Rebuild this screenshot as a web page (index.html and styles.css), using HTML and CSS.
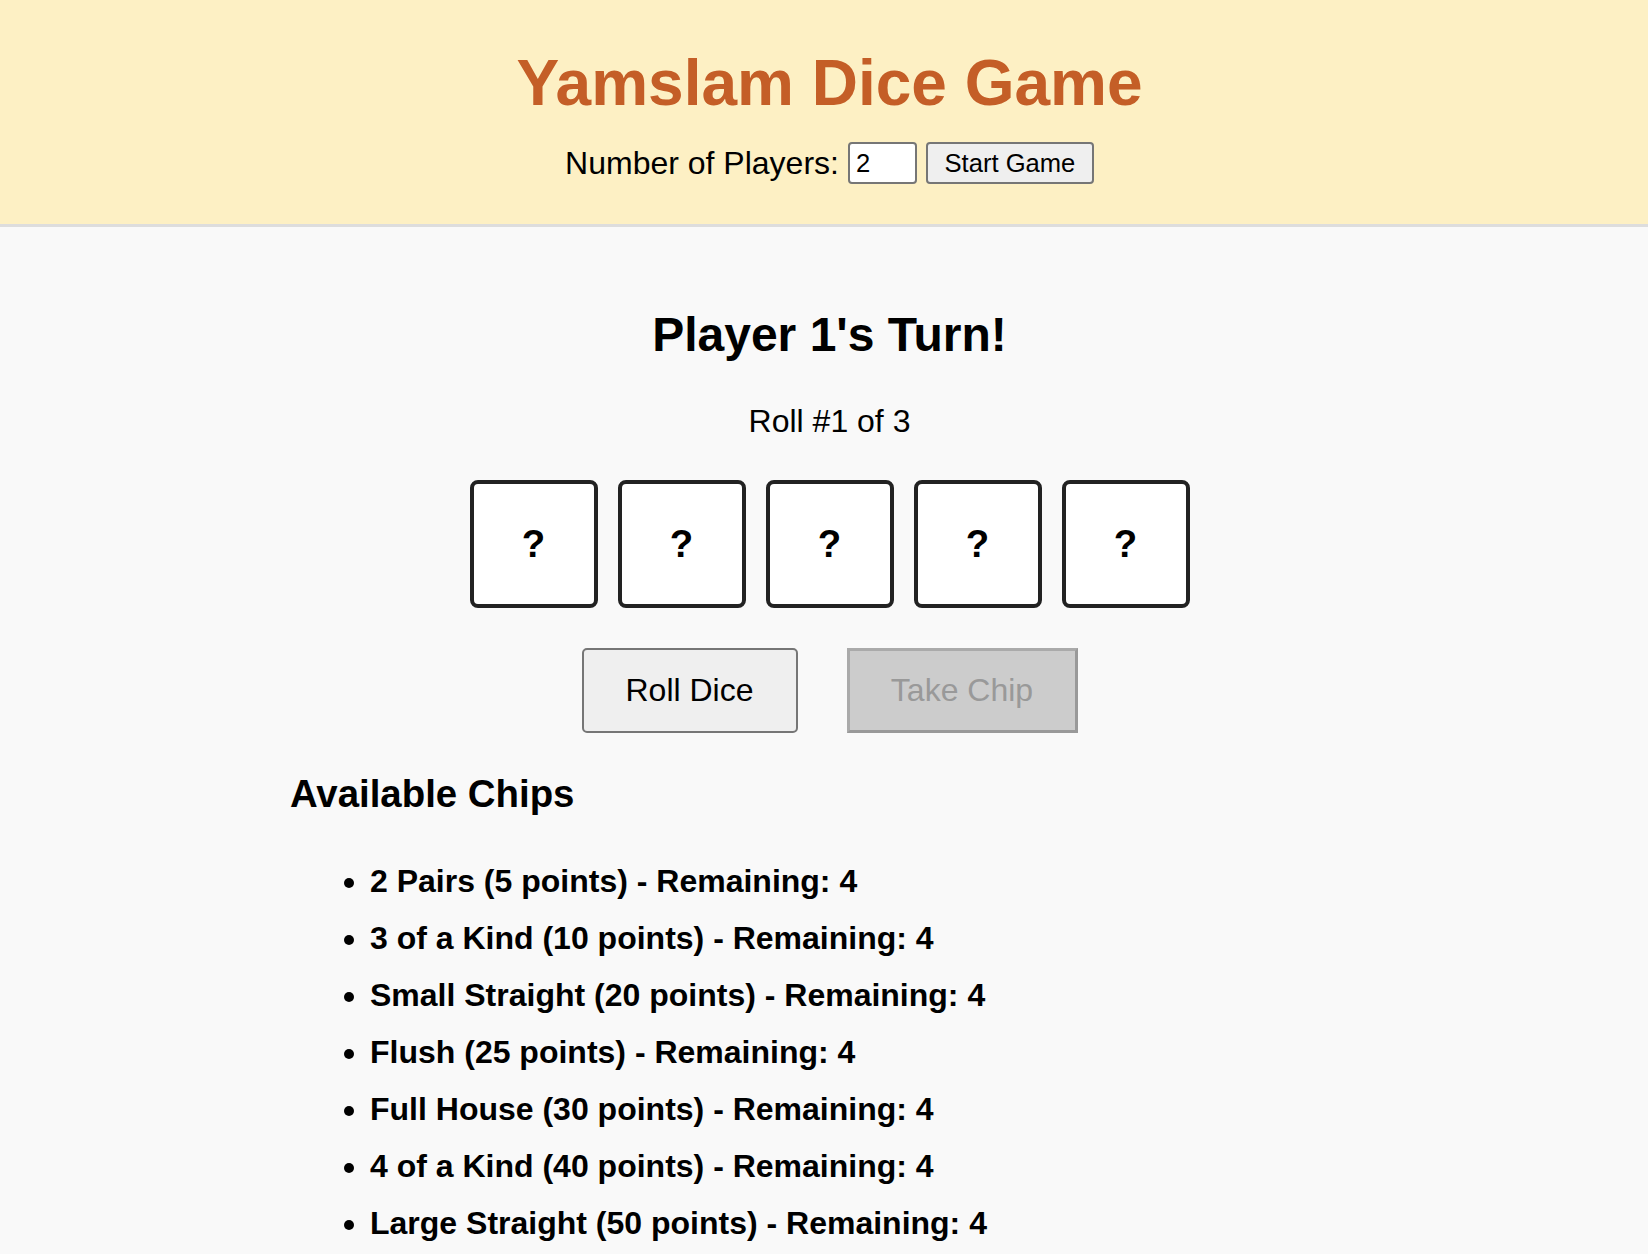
FILE: index.html
```html
<!DOCTYPE html>
<html lang="en">
<head>
<meta charset="utf-8">
<title>Yamslam Dice Game</title>
<link rel="stylesheet" href="styles.css">
</head>
<body>
<header class="site-header">
  <h1 class="title">Yamslam Dice Game</h1>
  <div class="setup">
    <label class="setup-label" for="players">Number of Players:</label>
    <input class="players-input" id="players" type="number" value="2">
    <button class="start-btn" type="button">Start Game</button>
  </div>
</header>
<main class="main">
  <div class="game">
    <h2 class="turn">Player 1's Turn!</h2>
    <p class="roll">Roll #1 of 3</p>
    <div class="dice">
      <div class="die">?</div>
      <div class="die">?</div>
      <div class="die">?</div>
      <div class="die">?</div>
      <div class="die">?</div>
    </div>
    <div class="actions">
      <button class="btn btn-roll" type="button">Roll Dice</button>
      <button class="btn btn-take" type="button" disabled>Take Chip</button>
    </div>
    <h3 class="chips-title">Available Chips</h3>
    <ul class="chips">
      <li>2 Pairs (5 points) - Remaining: 4</li>
      <li>3 of a Kind (10 points) - Remaining: 4</li>
      <li>Small Straight (20 points) - Remaining: 4</li>
      <li>Flush (25 points) - Remaining: 4</li>
      <li>Full House (30 points) - Remaining: 4</li>
      <li>4 of a Kind (40 points) - Remaining: 4</li>
      <li>Large Straight (50 points) - Remaining: 4</li>
    </ul>
  </div>
</main>
</body>
</html>
```
FILE: styles.css
```css
html, body {
  margin: 0;
  padding: 0;
}
body {
  background: #f9f9f9;
  font-family: "Liberation Sans", Arial, sans-serif;
  color: #000;
}
.site-header {
  background: #fdf0c4;
  border-bottom: 3px solid #dddddd;
  padding: 46px 0 40px 11px;
  text-align: center;
}
.title {
  margin: 0 0 22px;
  font-size: 64px;
  line-height: 74px;
  font-weight: bold;
  color: #c45e27;
}
.setup {
  display: flex;
  justify-content: center;
  align-items: center;
  height: 42px;
}
.setup-label {
  font-size: 32px;
  line-height: 37px;
  margin-right: 9px;
}
.players-input {
  box-sizing: border-box;
  width: 69px;
  height: 42px;
  margin: 0 9px 0 0;
  padding: 0 6px;
  border: 2px solid #767676;
  border-radius: 4px;
  background: #fff;
  font-family: "Liberation Sans", Arial, sans-serif;
  font-size: 25.6px;
  color: #000;
  -moz-appearance: textfield;
}
.players-input::-webkit-outer-spin-button,
.players-input::-webkit-inner-spin-button {
  -webkit-appearance: none;
  margin: 0;
}
.start-btn {
  box-sizing: border-box;
  width: 168px;
  height: 42px;
  padding: 0;
  border: 2px solid #767676;
  border-radius: 4px;
  background: #efefef;
  font-family: "Liberation Sans", Arial, sans-serif;
  font-size: 25.6px;
  color: #000;
}
.main {
  padding: 80px 0 40px 11px;
}
.game {
  max-width: 1079px;
  margin: 0 auto;
}
.turn {
  margin: 0;
  text-align: center;
  font-size: 48px;
  line-height: 55px;
  font-weight: bold;
}
.roll {
  margin: 41px 0 0;
  text-align: center;
  font-size: 32px;
  line-height: 37px;
}
.dice {
  margin-top: 40px;
  display: flex;
  justify-content: center;
  gap: 20px;
}
.die {
  box-sizing: border-box;
  width: 128px;
  height: 128px;
  border: 4px solid #222;
  border-radius: 8px;
  background: #fff;
  display: flex;
  align-items: center;
  justify-content: center;
  font-size: 38.4px;
  font-weight: bold;
}
.actions {
  margin-top: 40px;
  display: flex;
  justify-content: center;
  gap: 49px;
}
.btn {
  box-sizing: border-box;
  height: 85px;
  padding: 0;
  font-family: "Liberation Sans", Arial, sans-serif;
  font-size: 32px;
}
.btn-roll {
  width: 216px;
  background: #efefef;
  border: 2px solid #767676;
  border-radius: 5px;
  color: #000;
}
.btn-take {
  width: 231px;
  background: #cccccc;
  border: 3px solid;
  border-color: #aaaaaa #999999 #999999 #aaaaaa;
  border-radius: 0;
  color: #999999;
}
.chips-title {
  margin: 39px 0 0;
  font-size: 38.4px;
  line-height: 44px;
  font-weight: bold;
}
.chips {
  margin: 47px 0 0;
  padding-left: 80px;
  list-style: disc;
}
.chips li {
  font-size: 32px;
  line-height: 37px;
  font-weight: bold;
  margin-bottom: 20px;
}
```
